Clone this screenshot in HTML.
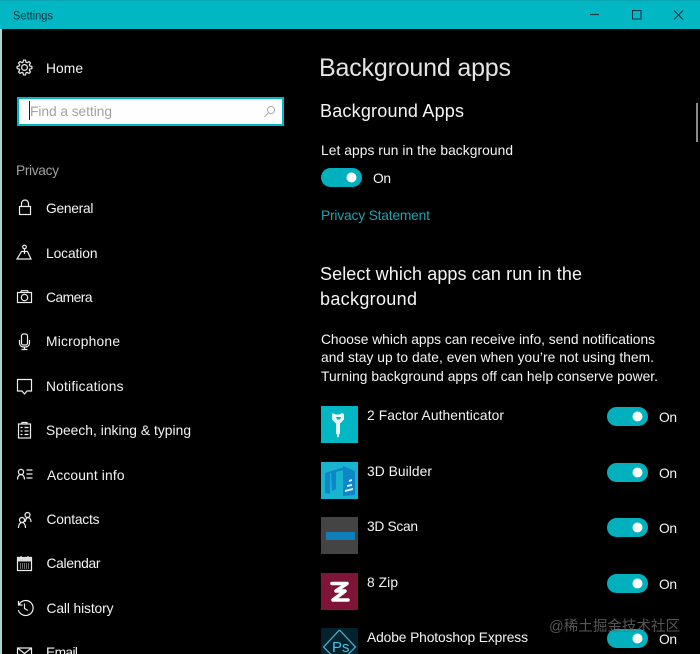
<!DOCTYPE html>
<html><head><meta charset="utf-8"><style>
html,body{margin:0;padding:0;background:#000;width:700px;height:654px;overflow:hidden}
svg{display:block;filter:blur(.25px)}
text{font-family:"Liberation Sans","Noto Sans CJK SC",sans-serif;fill:#f4f4f4;font-size:13.8px}
.i{fill:none;stroke:#eee;stroke-width:1.2}
</style></head><body>
<svg width="700" height="654" viewBox="0 0 700 654" xmlns="http://www.w3.org/2000/svg">
<defs>
<g id="tog"><rect x="0" y="0" width="41" height="19" rx="9.5" fill="#00b0bd"/><circle cx="30.5" cy="9.5" r="5" fill="#fff"/></g>
</defs>
<rect width="700" height="654" fill="#000"/>
<rect x="0" y="0" width="700" height="29" fill="#00b7c3"/>
<rect x="0" y="0" width="700" height="1" fill="#0aa5b2"/>
<rect x="0" y="29" width="2" height="625" fill="#a9d5d3"/>
<text x="13" y="19.5" textLength="40" lengthAdjust="spacingAndGlyphs" style="font-size:11.5px;fill:#06323d">Settings</text>
<path d="M590 14.5h9" stroke="#0a3340" stroke-width="1.2"/>
<rect x="632.5" y="10.5" width="8.5" height="8.5" fill="none" stroke="#0a3340" stroke-width="1"/>
<path d="M674 10.5l9 9M683 10.500l-9 9" stroke="#0a3340" stroke-width="1"/>

<g transform="translate(24.500 67.500)" class="i" stroke-linejoin="round">
<circle r="2.900"/>
<path d="M5.29 -1.52L7.43 -1.04L7.43 1.04L5.29 1.52L4.81 2.67L5.99 4.51L4.51 5.99L2.67 4.81L1.52 5.29L1.04 7.43L-1.04 7.43L-1.52 5.29L-2.67 4.81L-4.51 5.99L-5.99 4.51L-4.81 2.67L-5.29 1.52L-7.43 1.04L-7.43 -1.04L-5.29 -1.52L-4.81 -2.67L-5.99 -4.51L-4.51 -5.99L-2.67 -4.81L-1.52 -5.29L-1.04 -7.43L1.04 -7.43L1.52 -5.29L2.67 -4.81L4.51 -5.99L5.99 -4.51L4.81 -2.67Z"/>
</g>
<text x="46" y="73" textLength="37">Home</text>

<rect x="18" y="98" width="265" height="27" fill="#fff" stroke="#00b7c3" stroke-width="2"/>
<rect x="29" y="101" width="1" height="19" fill="#222"/>
<text x="30" y="116" textLength="82" style="fill:#a2a2a2">Find a setting</text>
<circle cx="271" cy="110" r="3.600" fill="none" stroke="#aaa"/><path d="M268.300 113l-3.800 3.800" stroke="#aaa"/>
<text x="16" y="175" textLength="43" style="fill:#a0a0a0">Privacy</text>

<g class="i">
<rect x="19.500" y="206.500" width="11" height="8"/><path d="M21.500 206.500v-3a3.500 3.500 0 0 1 7 0v3"/>
<circle cx="24.500" cy="247" r="1.800"/><path d="M24.500 249v5M21.500 251.500h6l3.500 7.500h-14z"/>
<rect x="17.500" y="292.500" width="14" height="10"/><circle cx="24.500" cy="297.500" r="3.200"/><path d="M20.500 292.500l1-1.800h6l1 1.800"/>
<rect x="21.500" y="334" width="6" height="11" rx="2"/><path d="M19.500 340v3a4 4 0 0 0 4 4h2a4 4 0 0 0 4-4v-3M24.500 347v2M21.500 349.500h6"/>
<path d="M17.500 379.500h14v11.500h-4.500l-2.500 3-2.500-3h-4.500z"/>
<rect x="18.500" y="424" width="12" height="14"/><path d="M22 424v-1.500h5v1.500M24.500 427.500h4M24.500 431h4M24.500 434.500h4M20.500 427.500h2M20.500 431h2M20.500 434.500h2"/>
<circle cx="21" cy="472" r="2.600"/><path d="M17.500 479.500c0-3 1.500-5 3.500-5s3.500 2 3.500 5M26.500 470h6M26.500 474h6M26.500 478h6"/>
<circle cx="22" cy="520" r="2.500"/><path d="M18.500 528c0-3.500 1.500-5.500 3.500-5.500s3.500 2 3.500 5.500"/><circle cx="27.500" cy="515" r="2.500"/><path d="M25 522c.5-2 1-4 2.500-4.500 2 0 3.500 1.500 3.500 4.500"/>
<rect x="17.500" y="557.500" width="14" height="13"/><path d="M21 556v3M28 556v3"/>
<path d="M19 604.500a7.500 7.500 0 1 1-.6 5.500M18.500 601v4h4M24.500 603.500v5l3.500 2"/>
<rect x="17.500" y="648" width="14" height="10"/><path d="M17.500 648l7 5.500 7-5.500"/>
</g>
<rect x="17.500" y="557.500" width="14" height="4" fill="#ddd"/>
<path d="M20 564h9M20 566h9M20 568h9" stroke="#ddd" stroke-dasharray="1 1"/>

<text x="46" y="213" textLength="47.500">General</text>
<text x="46" y="258" textLength="51.500">Location</text>
<text x="46" y="302" textLength="46.500">Camera</text>
<text x="46" y="346" textLength="74">Microphone</text>
<text x="46" y="391" textLength="77.500">Notifications</text>
<text x="46" y="435" textLength="145">Speech, inking &amp; typing</text>
<text x="47" y="480" textLength="77.500">Account info</text>
<text x="46.500" y="524" textLength="53">Contacts</text>
<text x="46.500" y="568" textLength="54">Calendar</text>
<text x="46.500" y="613" textLength="67">Call history</text>
<text x="46" y="657" textLength="32">Email</text>

<text x="319" y="76" textLength="192" style="font-size:25px;fill:#e4e4e4">Background apps</text>
<text x="320" y="117" textLength="144" style="font-size:18px">Background Apps</text>
<text x="321" y="155" textLength="192">Let apps run in the background</text>
<use href="#tog" x="321" y="168"/>
<text x="373" y="183" textLength="18">On</text>
<text x="321" y="220" textLength="109" style="fill:#1ca3ad">Privacy Statement</text>
<text x="320" y="280" textLength="262" style="font-size:18px">Select which apps can run in the</text>
<text x="320" y="305" textLength="97" style="font-size:18px">background</text>
<text x="321" y="344" textLength="334">Choose which apps can receive info, send notifications</text>
<text x="321" y="362" textLength="333">and stay up to date, even when you’re not using them.</text>
<text x="321" y="381" textLength="337">Turning background apps off can help conserve power.</text>

<rect x="321" y="406" width="37" height="37" fill="#00b7c3"/>
<path d="M333 413l2.500 1.500h4l2.500-1.500 2 1v5.500l-3 3-1 1v10l-1 1v2l-1 1-1-1v-2l-1-1v-10l-1-1-3-3V414z" fill="#eefafa"/>
<path d="M336 417h5l-1 2.500h-3z" fill="#00b7c3"/>
<rect x="321" y="462" width="37" height="37" fill="#18b4cf"/>
<path d="M325 473l19-6v3l-8 2v17l-4 2-1-18-1 0v21l-5-1z" fill="#0f86c8"/>
<path d="M343 466l12 5v24l-12 1z" fill="#0f86c8"/>
<path d="M345 490l8-2v2l-8 2zM347 485l5-1v2l-5 1zM349 480l3-1v2l-3 1z" fill="#d8f2f4"/>
<rect x="321" y="517" width="37" height="37" fill="#444"/>
<rect x="326" y="532" width="29" height="8" fill="#0f7fbc"/>
<rect x="321" y="573" width="37" height="37" fill="#7f1438"/>
<path d="M332 583.500H347L336 591H345L333 600H348" fill="none" stroke="#fff" stroke-width="3.600" stroke-linejoin="round" stroke-linecap="round"/>
<rect x="321" y="628" width="37" height="26" fill="#04222e"/>
<path d="M339.500 630l16 17-8 8M339.500 630l-16 17 8 8" fill="none" stroke="#4aa8c4" stroke-width="1.300"/>
<text x="332" y="652" style="font-size:15px;fill:#4cc0e0">Ps</text>

<text x="367" y="420" textLength="137">2 Factor Authenticator</text>
<text x="367" y="476" textLength="65">3D Builder</text>
<text x="367" y="531" textLength="51">3D Scan</text>
<text x="367" y="587" textLength="31">8 Zip</text>
<text x="367" y="642" textLength="161">Adobe Photoshop Express</text>

<use href="#tog" x="607" y="407"/><text x="659" y="422" textLength="18">On</text>
<use href="#tog" x="607" y="463"/><text x="659" y="478" textLength="18">On</text>
<use href="#tog" x="607" y="518"/><text x="659" y="533" textLength="18">On</text>
<use href="#tog" x="607" y="574"/><text x="659" y="589" textLength="18">On</text>
<use href="#tog" x="607" y="629"/><text x="659" y="644" textLength="18">On</text>

<rect x="696" y="103" width="2" height="39" fill="#8a8a8a"/>
<text x="549" y="631" textLength="131" style="font-size:14.500px;fill:#6a6a6a;fill-opacity:.8">@稀土掘金技术社区</text>
</svg>
</body></html>
